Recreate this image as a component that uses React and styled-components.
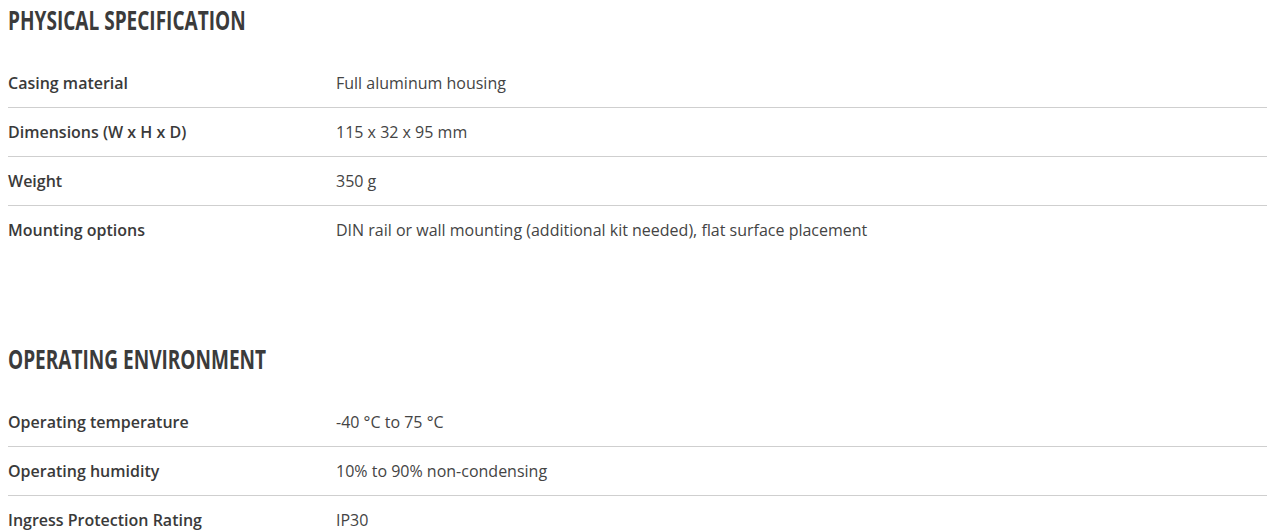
import styled, { createGlobalStyle } from 'styled-components';

const GlobalStyle = createGlobalStyle`
  body {
    margin: 0;
    background: #fff;
    font-family: "Open Sans", "Liberation Sans", sans-serif;
    color: #3c3c3c;
  }
`

const Page = styled.div`
  padding: 0 3px 0 8px;
`

const Section = styled.section`
  margin-bottom: 84px;
`

const HeadingWrap = styled.div`
  height: 47px;
  padding-top: 5px;
  box-sizing: border-box;
`

/** Condensed uppercase section title (no Oswald offline, so squeeze the bold sans) */
const Heading = styled.h2`
  display: inline-block;
  margin: 0;
  font-family: "Open Sans", "Liberation Sans", sans-serif;
  font-weight: 700;
  font-size: 27px;
  line-height: 30px;
  color: #3b3b3b;
  text-transform: uppercase;
  transform: scaleX(0.705);
  transform-origin: left center;
  white-space: nowrap;
`

const Table = styled.div`
  margin-top: 12px;
`

const Row = styled.div`
  display: grid;
  grid-template-columns: 328px 1fr;
  align-items: center;
  height: 48px;
  font-size: 16px;
  border-bottom: 1px solid ${props => (props.last ? 'transparent' : '#cfcfcf')};
`

const Label = styled.div`
  font-weight: 600;
  color: #3a3a3a;
`

const Value = styled.div`
  font-weight: 400;
  color: #444;
`

const SECTIONS = [
  {
    title: 'Physical specification',
    rows: [
      ['Casing material', 'Full aluminum housing'],
      ['Dimensions (W x H x D)', '115 x 32 x 95 mm'],
      ['Weight', '350 g'],
      ['Mounting options', 'DIN rail or wall mounting (additional kit needed), flat surface placement'],
    ],
  },
  {
    title: 'Operating environment',
    rows: [
      ['Operating temperature', '-40 °C to 75 °C'],
      ['Operating humidity', '10% to 90% non-condensing'],
      ['Ingress Protection Rating', 'IP30'],
    ],
  },
]

export default function App() {
  return (
    <Page>
      <GlobalStyle />
      {SECTIONS.map(section => (
        <Section key={section.title}>
          <HeadingWrap>
            <Heading>{section.title}</Heading>
          </HeadingWrap>
          <Table>
            {section.rows.map(([label, value], i) => (
              <Row key={label} last={i === section.rows.length - 1}>
                <Label>{label}</Label>
                <Value>{value}</Value>
              </Row>
            ))}
          </Table>
        </Section>
      ))}
    </Page>
  )
}
